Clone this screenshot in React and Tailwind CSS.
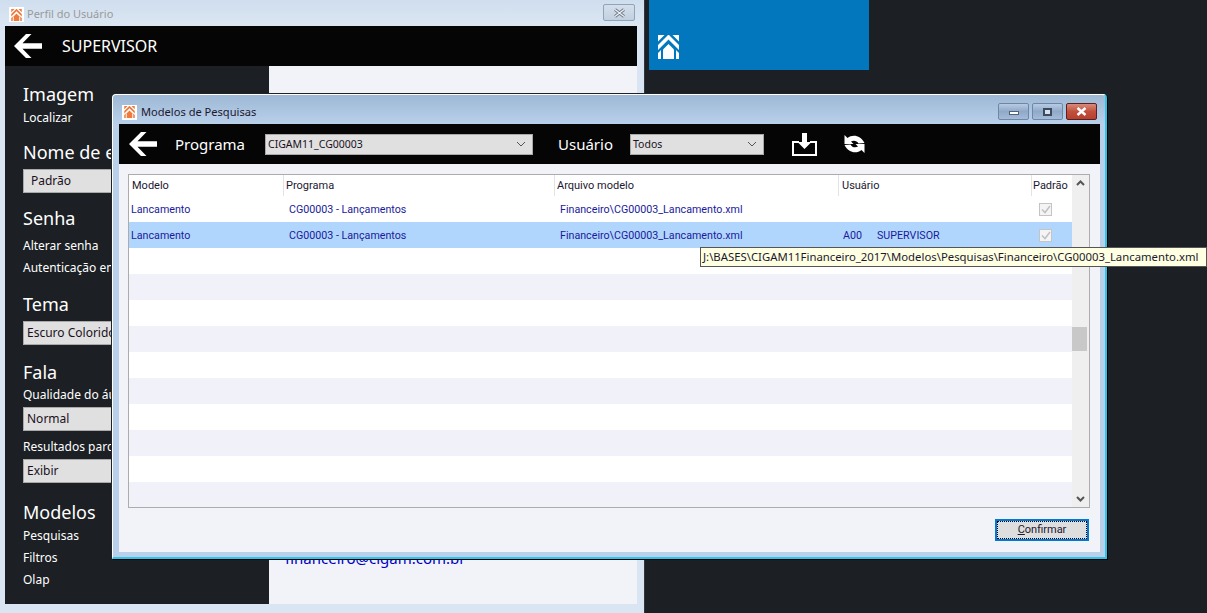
const FONT = "font-['Noto_Sans',sans-serif]"

function BackArrow() {
  return (
    <svg width="28" height="24" viewBox="0 0 28 24" fill="white">
      <path d="M12 0h5.500L8.500 9.200H28v5.600H8.500L17.500 24H12L0 12z" />
    </svg>
  )
}

function Logo({ width = 21, height = 24, color = 'white' }) {
  return (
    <svg width={width} height={height} viewBox="0 0 21 24" fill={color}>
      <path d="M0 0h6.500L0 6.500zM21 0h-6.500L21 6.500z" />
      <path d="M0 10L10 0h1l10 10v5L10.500 4.500 0 15z" />
      <path d="M10.500 9l5.500 5.500V24H5V14.500z" />
      <path d="M0 18l3-3v9H0zM21 18l-3-3v9h3z" />
    </svg>
  )
}

function TitleIcon() {
  return (
    <div className="w-[15px] h-[15px] bg-white flex items-center justify-center shrink-0">
      <Logo width={11} height={12} color="#ee7a3c" />
    </div>
  )
}

function SyncIcon() {
  return (
    <svg width="21" height="20" viewBox="0 0 20 20" fill="white">
      <path d="M0 1L3 4C8 0 16 1 20 9L14 9.500C12.500 6.500 9 6 6.500 7.500L9 10H0z" />
      <path d="M20 19L17 16C12 20 4 19 0 11L6 10.500C7.500 13.500 11 14 13.500 12.500L11 10H20z" />
    </svg>
  )
}

function SideSelect({ text, inset }) {
  return (
    <div className={`h-[24px] w-[120px] bg-[#e0e0e0] border border-[#a9a9a9] flex items-center text-[12px] text-[#1a1020] ${inset ? 'pl-[7px]' : 'pl-[3px]'}`}>
      {text}
    </div>
  )
}

function Head({ children, top }) {
  return <div className="text-[18px] leading-[24px] text-white whitespace-nowrap" style={{ marginTop: top }}>{children}</div>
}

function Item({ children, top }) {
  return <div className="text-[12px] leading-[16px] text-white whitespace-nowrap" style={{ marginTop: top }}>{children}</div>
}

function Sidebar() {
  return (
    <div className="w-[264px] h-[538px] bg-[#1c1f24] pl-[18px] pt-[16px] overflow-hidden shrink-0">
      <Head top={0}>Imagem</Head>
      <Item top={4}>Localizar</Item>
      <Head top={14}>Nome de exibição</Head>
      <div className="mt-[5px]"><SideSelect text="Padrão" inset /></div>
      <Head top={13}>Senha</Head>
      <Item top={8}>Alterar senha</Item>
      <Item top={6}>Autenticação em dois fatores</Item>
      <Head top={16}>Tema</Head>
      <div className="mt-[5px]"><SideSelect text="Escuro Colorido" /></div>
      <Head top={15}>Fala</Head>
      <Item top={3}>Qualidade do áudio</Item>
      <div className="mt-[4px]"><SideSelect text="Normal" /></div>
      <Item top={8}>Resultados parciais</Item>
      <div className="mt-[4px]"><SideSelect text="Exibir" /></div>
      <Head top={17}>Modelos</Head>
      <Item top={4}>Pesquisas</Item>
      <Item top={6}>Filtros</Item>
      <Item top={6}>Olap</Item>
    </div>
  )
}

function BackWindow() {
  return (
    <div className="absolute left-0 top-0 w-[645px] h-[613px] bg-[#d9e5f2] border-r border-[#33373d] flex flex-col">
      <div className="h-[26px] flex items-center px-[9px] pt-[3px] bg-gradient-to-b from-[#cfdeee] to-[#dbe6f2]">
        <TitleIcon />
        <span className="ml-[3px] text-[11px] text-[#9a9a9a]">Perfil do Usuário</span>
        <div className="ml-auto w-[32px] h-[17px] -mt-[4px] border border-[#8fa3b9] rounded-[2px] bg-gradient-to-b from-[#d4dfeb] to-[#c2d0e0] flex items-center justify-center">
          <svg width="13" height="10" viewBox="0 0 13 10" fill="none">
            <path d="M2 1.500l9 7M11 1.500l-9 7" stroke="#6b7684" strokeWidth="3" />
            <path d="M2 1.500l9 7M11 1.500l-9 7" stroke="#eef2f6" strokeWidth="1.300" />
          </svg>
        </div>
      </div>
      <div className="mx-[5px] w-[632px] h-[40px] bg-[#050505] flex items-center pl-[9px]">
        <BackArrow />
        <span className="ml-[20px] text-[16px] text-white -mt-[1px]">SUPERVISOR</span>
      </div>
      <div className="mx-[5px] w-[632px] flex bg-[#f1f3f9]">
        <Sidebar />
        <div className="pl-[16px] pt-[481px] text-[15px] text-[#0000c8]">financeiro@cigam.com.br</div>
      </div>
    </div>
  )
}

function WinButton({ kind }) {
  const close = kind === 'close'
  return (
    <div className={`w-[31px] h-[17px] rounded-[2px] border flex items-center justify-center ${close ? 'border-[#5a2020] bg-gradient-to-b from-[#d88a7a] via-[#c0503c] to-[#b8402c]' : 'border-[#6e87a6] bg-gradient-to-b from-[#b8cbe2] via-[#8fa9c8] to-[#a5bcd8]'}`}>
      {kind === 'min' && <div className="w-[10px] h-[4px] bg-white border border-[#50627a] mt-[3px]" />}
      {kind === 'max' && <div className="w-[9px] h-[8px] border-2 border-[#3b4a5e] bg-[#d5e0ec]" />}
      {close && <svg width="11" height="9" viewBox="0 0 11 9" stroke="white" strokeWidth="2.400" fill="none"><path d="M1.500 1l8 7M9.500 1l-8 7" /></svg>}
    </div>
  )
}

function ToolSelect({ text, width }) {
  return (
    <div className={`${width} h-[21px] bg-[#e0e0e0] border border-[#a9a9a9] flex items-center justify-between pl-[2px] pr-[6px] text-[10.500px] text-[#1a1020]`}>
      <span className="pt-[2px]">{text}</span>
      <svg width="10" height="6" viewBox="0 0 10 6" fill="none" stroke="#555" strokeWidth="1"><path d="M1 1l4 4 4-4" /></svg>
    </div>
  )
}

const COLS = "grid grid-cols-[154px_271px_284px_193px_41px] font-['Roboto',sans-serif]"

function Check() {
  return (
    <div className="w-[13px] h-[13px] border border-[#c4c4c4] bg-[#f4f4f4] flex items-center justify-center ml-[8px]">
      <svg width="10" height="9" viewBox="0 0 10 9" fill="none" stroke="#c0c0c0" strokeWidth="1.500"><path d="M1 4.500l3 3 5-6.500" /></svg>
    </div>
  )
}

function DataRow({ selected, user }) {
  return (
    <div className={`${COLS} h-[26px] shrink-0 items-center text-[10.700px] text-[#1a1a9c] ${selected ? 'bg-[#b1d6fd]' : 'bg-white'}`}>
      <div className="pl-[2px] pt-[2px]">Lancamento</div>
      <div className="pl-[6px] pt-[2px]">CG00003 - Lançamentos</div>
      <div className="pl-[6px] pt-[2px]">Financeiro\CG00003_Lancamento.xml</div>
      <div className="pl-[5px] pt-[2px] flex">{user && <><span className="w-[34px]">A00</span><span>SUPERVISOR</span></>}</div>
      <Check />
    </div>
  )
}

function HeadCell({ children, left }) {
  return <div className={`${left} pt-[2px] border-l border-[#e3e3e3] h-full flex items-center`}>{children}</div>
}

function Dialog() {
  const stripes = Array.from({ length: 10 }, (_, i) => i)
  return (
    <div className="absolute left-[112px] top-[94px] w-[995px] h-[465px] bg-[#b9d0ea] border-t border-l border-white rounded-t-[4px] shadow-[1px_1px_0_#000,-1px_-1px_0_#222] border-b-2 border-b-[#2fc4e8] border-r-2 border-r-[#2fc4e8] flex flex-col px-[6px]">
      <div className="h-[29px] -mx-[6px] pl-[9px] pr-[8px] pt-[5px] rounded-t-[4px] bg-gradient-to-b from-[#9db8d5] to-[#b9d0ea] flex items-center shrink-0">
        <TitleIcon />
        <span className="ml-[4px] text-[11.100px] text-[#1c1830]">Modelos de Pesquisas</span>
        <div className="ml-auto flex gap-[3px] -mt-[1px]">
          <WinButton kind="min" />
          <WinButton kind="max" />
          <WinButton kind="close" />
        </div>
      </div>
      <div className="w-[981px] h-[40px] bg-[#050505] flex items-center pl-[10px] text-white shrink-0">
        <BackArrow />
        <span className="ml-[18px] text-[15px]">Programa</span>
        <div className="ml-[20px]"><ToolSelect text="CIGAM11_CG00003" width="w-[268px]" /></div>
        <span className="ml-[25px] text-[15px]">Usuário</span>
        <div className="ml-[17px]"><ToolSelect text="Todos" width="w-[134px]" /></div>
        <svg className="ml-[28px]" width="25" height="23" viewBox="0 0 25 23" fill="white">
          <path d="M0 8h7v2H2v11h21V10h-5V8h7v15H0z" />
          <path d="M10 0h5v9h4.500l-7 7-7-7H10z" />
        </svg>
        <div className="ml-[27px]"><SyncIcon /></div>
      </div>
      <div className="w-[981px] h-[388px] bg-[#f1f3f9] pt-[10px] px-[9px] shrink-0">
        <div className="w-[962px] h-[334px] border border-[#acacac] flex bg-[#f1f3f9]">
          <div className="w-[943px] h-full flex flex-col overflow-hidden">
            <div className={`${COLS} h-[21px] bg-white text-[11px] text-[#1c1830] items-center shrink-0`}>
              <div className="pl-[3px] pt-[2px]">Modelo</div>
              <HeadCell left="pl-[2px]">Programa</HeadCell>
              <HeadCell left="pl-[2px]">Arquivo modelo</HeadCell>
              <HeadCell left="pl-[3px]">Usuário</HeadCell>
              <HeadCell left="pl-[1px]">Padrão</HeadCell>
            </div>
            <DataRow />
            <DataRow selected user />
            {stripes.map(i => (
              <div key={i} className={`h-[26px] shrink-0 ${i % 2 ? 'bg-[#f1f2f9]' : 'bg-white'}`} />
            ))}
          </div>
          <div className="w-[17px] h-full bg-[#efefef] flex flex-col items-center justify-between py-[5px] relative">
            <svg width="9" height="6" viewBox="0 0 9 6" fill="none" stroke="#555" strokeWidth="2"><path d="M1 5l3.500-3.500L8 5" /></svg>
            <div className="w-[15px] h-[24px] bg-[#c8c8c8] absolute left-0 top-[152px]" />
            <svg width="9" height="6" viewBox="0 0 9 6" fill="none" stroke="#555" strokeWidth="2"><path d="M1 1l3.500 3.500L8 1" /></svg>
          </div>
        </div>
        <div className="flex justify-end mt-[11px]">
          <button className="w-[94px] h-[22px] border-2 border-[#0078d7] bg-[#dedede] p-0 mr-[2px]">
            <div className="h-full border border-dotted border-black flex items-center justify-center text-[11px] text-[#1c1830]">
              <span className="font-['Roboto',sans-serif]"><u>C</u>onfirmar</span>
            </div>
          </button>
        </div>
      </div>
    </div>
  )
}

export default function App() {
  return (
    <div className={`relative w-[1207px] h-[613px] overflow-hidden bg-[#1c1f24] ${FONT}`}>
      <BackWindow />
      <div className="absolute left-[649px] top-0 w-[220px] h-[70px] bg-[#0277bd] flex items-end pl-[9px] pb-[11px]">
        <Logo />
      </div>
      <Dialog />
      <div className="absolute left-[700px] top-[247px] w-[507px] h-[20px] bg-[#ffffe1] border border-[#555] flex items-center pl-[2px] pb-[1px] text-[11.340px] text-[#1c1830] whitespace-nowrap">
        J:\BASES\CIGAM11Financeiro_2017\Modelos\Pesquisas\Financeiro\CG00003_Lancamento.xml
      </div>
    </div>
  )
}
